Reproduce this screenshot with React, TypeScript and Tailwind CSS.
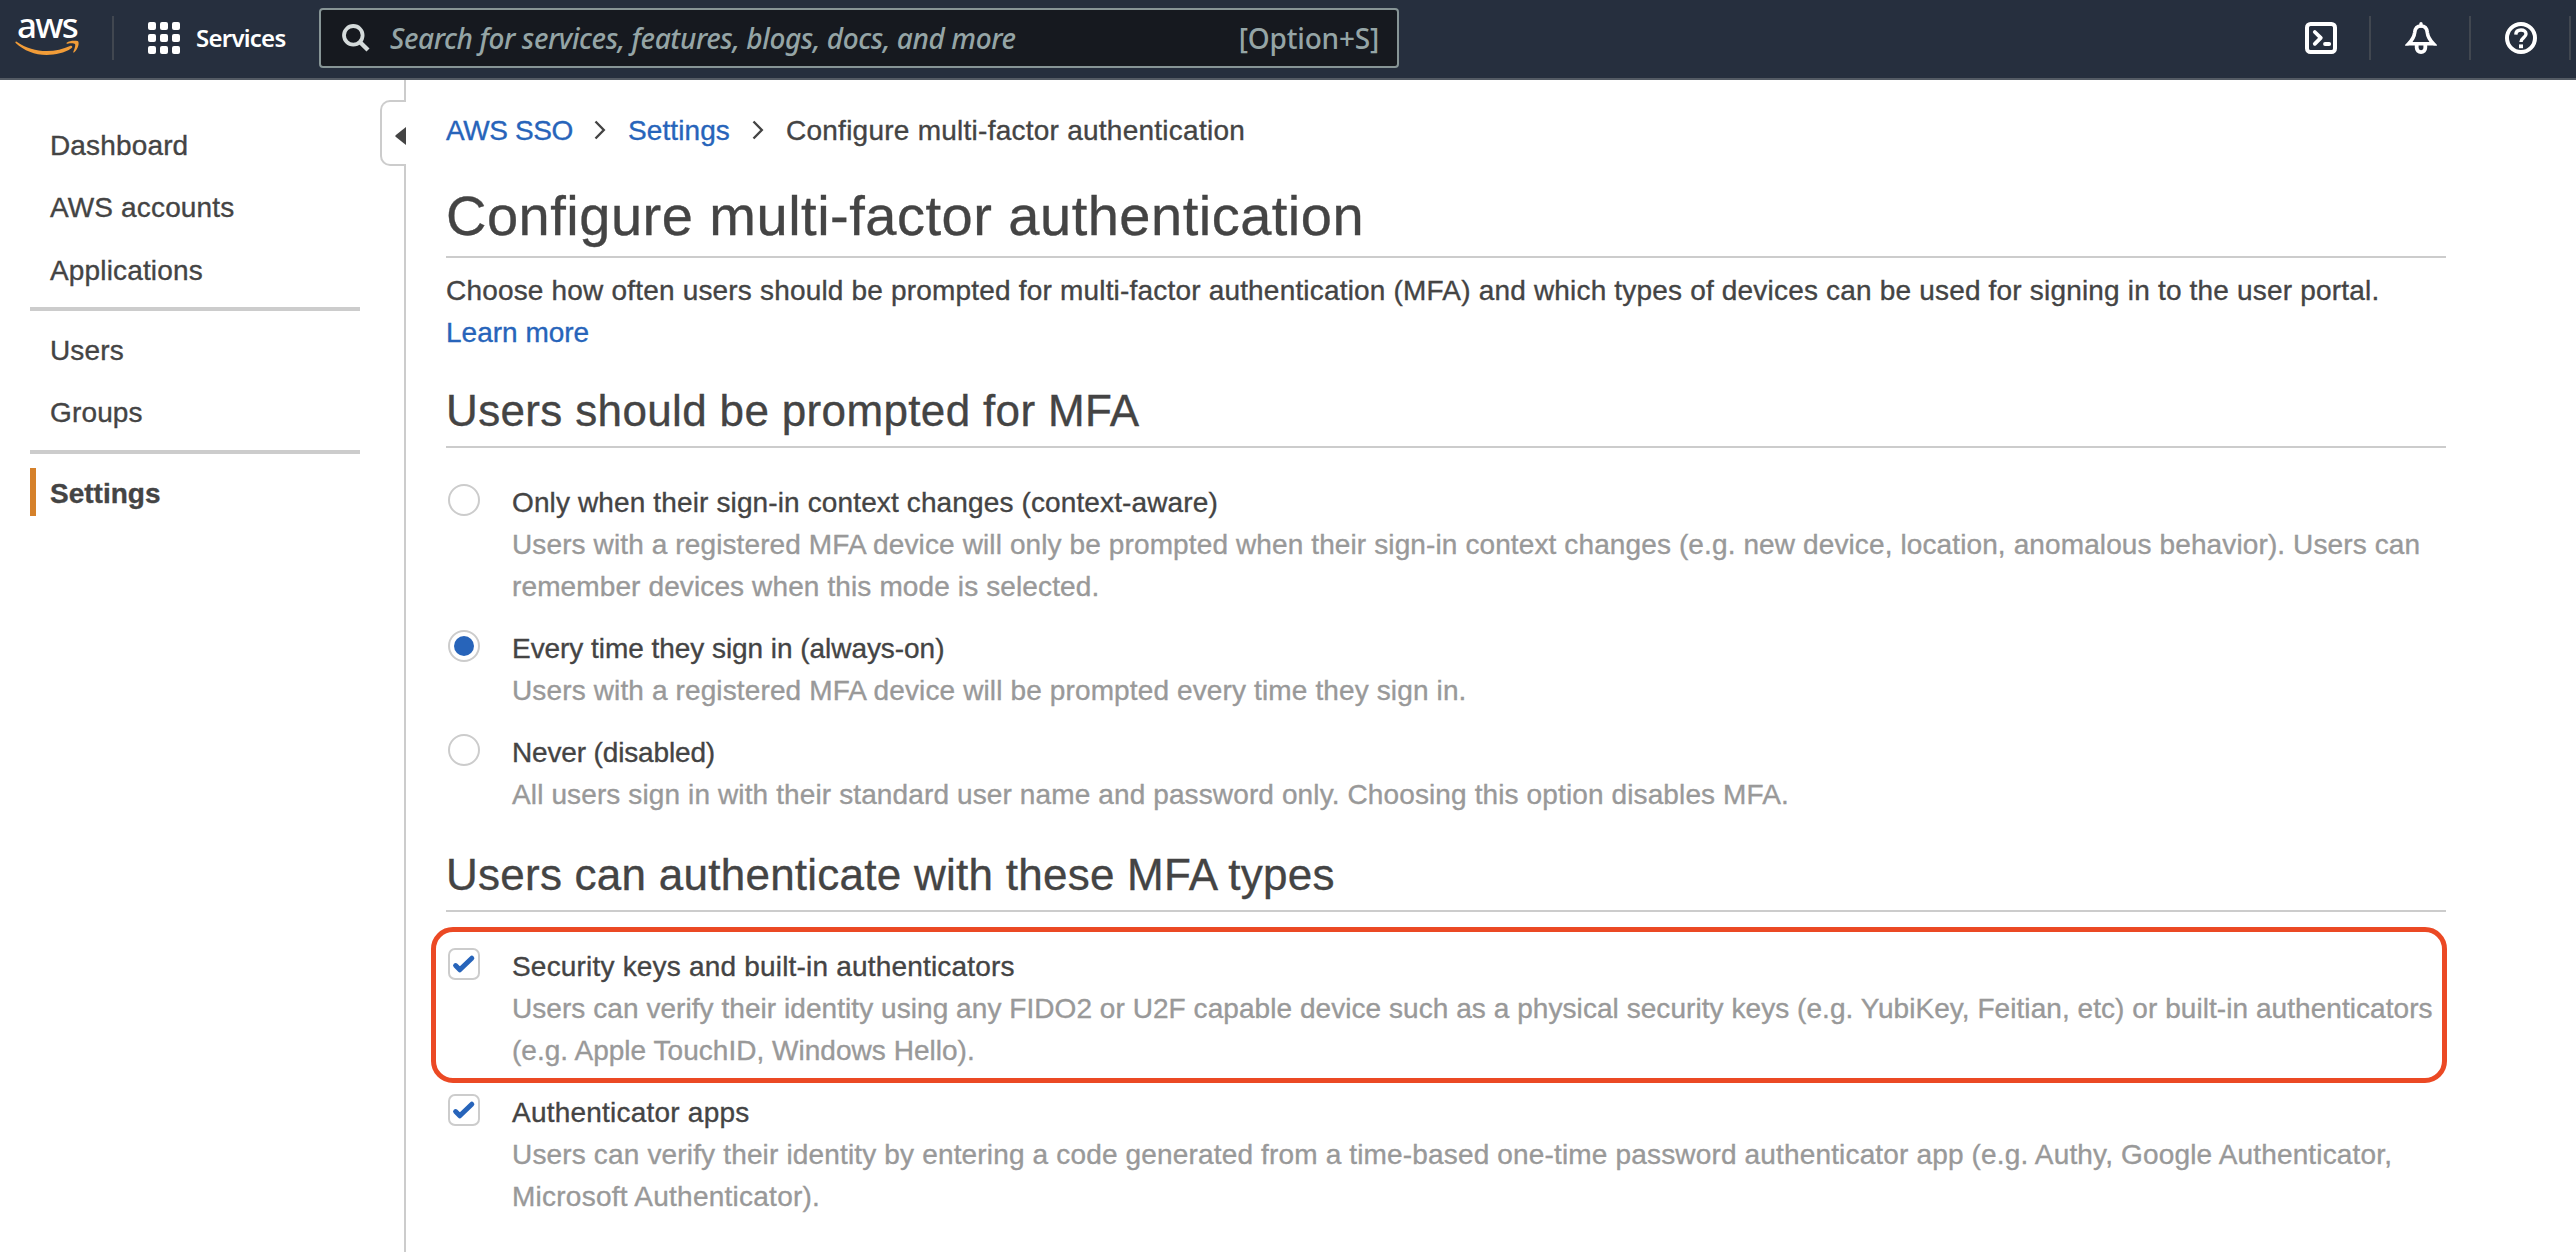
import type { ReactNode } from "react";

function AwsLogo() {
  return (
    <div className="ml-[14px] flex h-20 w-[66px] flex-col items-center pt-[11px]">
      <span className="h-[32px] font-['Noto_Sans',sans-serif] text-[35px] leading-[32px] font-medium tracking-[-1.8px] text-white">
        aws
      </span>
      <svg viewBox="42 126 198 48" className="mt-[-1px] h-4 w-[66px] shrink-0" fill="#f19c38">
        <path d="M50 131C78 150 108 159 140 159C166 159 190 153 210 144C216 141 220 147 214 151C194 165 166 171 140 171C104 171 72 158 47 135C45 132 47 129 50 131Z" />
        <path d="M200 134C208 128 222 127 233 129C239 131 236 152 223 163C220 165 219 163 220 161C225 149 227 141 225 138C222 135 211 135 203 137C199 137 199 135 200 134Z" />
      </svg>
    </div>
  );
}

function GridIcon() {
  return (
    <span className="grid h-8 w-8 grid-cols-3 gap-1">
      {Array.from({ length: 9 }, (_, i) => (
        <span key={i} className="h-2 w-2 rounded-[2px] bg-white" />
      ))}
    </span>
  );
}

function Divider() {
  return <span className="h-11 w-0.5 bg-[#414750]" />;
}

function HeaderIcon({ children }: { children: ReactNode }) {
  return (
    <svg viewBox="0 0 32 32" className="mr-8 ml-[34px] h-8 w-8" fill="none" stroke="#fff" strokeWidth="4">
      {children}
    </svg>
  );
}

function Header() {
  return (
    <header className="flex h-20 items-center border-b-2 border-[#545b64] bg-[#262f3e] pb-0.5 font-['Noto_Sans',sans-serif]">
      <AwsLogo />
      <span className="ml-8 flex">
        <Divider />
      </span>
      <span className="ml-[34px] flex">
        <GridIcon />
      </span>
      <span className="ml-4 w-[123px] text-[24px] leading-8 font-semibold tracking-[-0.75px] text-white">Services</span>
      <div className="flex h-[60px] w-[1080px] items-center rounded-[4px] border-2 border-[#879596] bg-[#16191f] text-[28px] leading-[56px] font-medium text-[#95a5a6]">
        <svg viewBox="0 0 28 28" className="ml-[21px] h-7 w-7" fill="none" stroke="#d5dbdb" strokeWidth="3.8">
          <circle cx="11.3" cy="11.3" r="9.3" />
          <path d="M17.6 17.8L26 26" strokeWidth="4.4" />
        </svg>
        <span className="ml-5 tracking-[-0.4px] italic">Search for services, features, blogs, docs, and more</span>
        <span className="mr-[18px] ml-auto tracking-[-0.2px]">[Option+S]</span>
      </div>
      <div className="mr-[5px] ml-auto flex items-center">
        <HeaderIcon>
          <rect x="2" y="2" width="28" height="28" rx="3.5" />
          <path d="M9.8 10L15.8 15.9L9.8 21.8M20 22H24.2" strokeLinecap="round" strokeLinejoin="round" strokeWidth="3.8" />
        </HeaderIcon>
        <Divider />
        <HeaderIcon>
          <path d="M16 1.7V4" strokeLinecap="round" strokeWidth="3.4" />
          <path
            d="M16 4C12 4 10 7 9.7 10.5C9.2 15 8 17.2 3.6 21.8H28.4C24 17.2 22.8 15 22.3 10.5C22 7 20 4 16 4Z"
            strokeWidth="3.6"
          />
          <path d="M0 23.6L3.6 19.9V23.6ZM32 23.6L28.4 19.9V23.6Z" fill="#fff" stroke="none" />
          <path d="M11.7 23V25.8A4.3 4.3 0 0 0 20.3 25.8V23" strokeWidth="3.8" />
        </HeaderIcon>
        <Divider />
        <HeaderIcon>
          <circle cx="16" cy="16" r="14" />
          <path d="M10.8 12.6C10.9 9.6 13 8 16 8C19 8 21 9.6 21 12C21 15.6 16 15.6 16 20" strokeWidth="3.4" />
          <path d="M14 24.3H18" strokeWidth="3.8" />
        </HeaderIcon>
        <Divider />
      </div>
    </header>
  );
}

function NavItem({ label, active = false }: { label: string; active?: boolean }) {
  return active ? (
    <a className="flex h-12 items-center border-l-6 border-[#d5812b] pt-[3px] pl-[14px] leading-[42px] font-bold">{label}</a>
  ) : (
    <a className="flex h-12 items-center pt-[3px] pl-5 leading-[42px] tracking-[0.15px]">{label}</a>
  );
}

function Sidebar() {
  return (
    <aside className="flex w-[406px] shrink-0">
      <nav className="ml-[30px] w-[330px] pt-10">
        <div className="flex flex-col gap-[14.5px]">
          <NavItem label="Dashboard" />
          <NavItem label="AWS accounts" />
          <NavItem label="Applications" />
        </div>
        <hr className="my-[14px] h-1 border-0 bg-[#ccc]" />
        <div className="flex flex-col gap-[14px]">
          <NavItem label="Users" />
          <NavItem label="Groups" />
        </div>
        <hr className="mt-[15px] mb-[14px] h-1 border-0 bg-[#ccc]" />
        <NavItem label="Settings" active />
      </nav>
      <div className="ml-5 flex w-[26px] flex-col">
        <div className="h-5 border-r-2 border-[#ccc]" />
        <button className="flex h-[66px] items-center justify-end rounded-l-[10px] border-2 border-r-0 border-[#ccc]">
          <svg viewBox="0 0 11 18" className="mt-1.5 h-[18px] w-[11px]" fill="#444">
            <path d="M11 0V18L0.6 9.8Q0 9 0.6 8.2Z" />
          </svg>
        </button>
        <div className="flex-1 border-r-2 border-[#ccc]" />
      </div>
    </aside>
  );
}

function Chevron() {
  return (
    <svg viewBox="0 0 12 20" className="mx-[22px] mb-[2px] h-5 w-3" fill="none" stroke="#444" strokeWidth="2.4">
      <path d="M1.5 1.5L9.8 10L1.5 18.5" />
    </svg>
  );
}

function Radio({ checked = false }: { checked?: boolean }) {
  return (
    <span className="ml-0.5 flex h-8 w-8 shrink-0 items-center justify-center rounded-full border-2 border-[#ccc]">
      {checked && <span className="h-5 w-5 rounded-full bg-[#2764ba]" />}
    </span>
  );
}

function Checkbox() {
  return (
    <span className="ml-0.5 h-8 w-8 shrink-0 rounded-[7px] border-2 border-[#ccc]">
      <svg viewBox="2 2 28 28" className="h-7 w-7" fill="none" stroke="#2764ba" strokeWidth="5" strokeLinecap="round" strokeLinejoin="round">
        <path d="M7.6 17.6L11.8 21.8L23.8 10.2" />
      </svg>
    </span>
  );
}

function Option({
  control,
  label,
  labelClass = "tracking-[0.13px]",
  children,
}: {
  control: ReactNode;
  label: string;
  labelClass?: string;
  children: ReactNode;
}) {
  return (
    <div className="flex">
      {control}
      <div className="-mt-[2px] ml-8 whitespace-nowrap">
        <div className={labelClass}>{label}</div>
        <div className="text-[#999]">{children}</div>
      </div>
    </div>
  );
}

export default function App() {
  return (
    <div className="flex h-[1252px] w-[2576px] flex-col overflow-hidden bg-white font-['Liberation_Sans',Arial,sans-serif] text-[28px] leading-[42px] text-[#444]">
      <Header />
      <div className="flex min-h-0 flex-1 [-webkit-text-stroke:0.35px]">
        <Sidebar />
        <main className="ml-10 w-[2000px] shrink-0">
          <div className="mt-[30px] flex h-[42px] items-center">
            <a className="w-[126px] tracking-[-0.4px] whitespace-nowrap text-[#2764ba]">AWS SSO</a>
            <Chevron />
            <a className="w-[102px] tracking-[0.1px] text-[#2764ba]">Settings</a>
            <Chevron />
            <span className="tracking-[0.25px]">Configure multi-factor authentication</span>
          </div>

          <h1 className="mt-6 h-[82px] border-b-2 border-[#ccc] text-[56px] leading-[79px] tracking-[0.5px]">
            Configure multi-factor authentication
          </h1>
          <p className="mt-3 tracking-[0.185px] whitespace-nowrap">
            Choose how often users should be prompted for multi-factor authentication (MFA) and which types of devices can be
            used for signing in to the user portal.
          </p>
          <a className="block text-[#2764ba]">Learn more</a>

          <h2 className="mt-[27px] h-[67px] border-b-2 border-[#ccc] text-[44px] leading-[60px] tracking-[0.35px]">
            Users should be prompted for MFA
          </h2>
          <div className="mt-9 flex flex-col gap-[22px]">
            <Option control={<Radio />} label="Only when their sign-in context changes (context-aware)">
              <p className="tracking-[0.115px]">
                Users with a registered MFA device will only be prompted when their sign-in context changes (e.g. new device,
                location, anomalous behavior). Users can
              </p>
              <p className="tracking-[0.12px]">remember devices when this mode is selected.</p>
            </Option>
            <Option control={<Radio checked />} label="Every time they sign in (always-on)" labelClass="tracking-[-0.05px]">
              <p className="tracking-[0.13px]">Users with a registered MFA device will be prompted every time they sign in.</p>
            </Option>
            <Option control={<Radio />} label="Never (disabled)" labelClass="tracking-[-0.15px]">
              <p className="tracking-[0.12px]">
                All users sign in with their standard user name and password only. Choosing this option disables MFA.
              </p>
            </Option>
          </div>

          <h2 className="mt-[27px] h-[69px] border-b-2 border-[#ccc] text-[44px] leading-[64px] tracking-[0.25px]">
            Users can authenticate with these MFA types
          </h2>
          <div className="mt-[15px] -mr-px -ml-[15px] h-[156px] rounded-[22px] border-5 border-[#eb4924] pt-4 pl-[10px]">
            <Option control={<Checkbox />} label="Security keys and built-in authenticators" labelClass="tracking-[0.19px]">
              <p className="tracking-[0.057px]">
                Users can verify their identity using any FIDO2 or U2F capable device such as a physical security keys (e.g.
                YubiKey, Feitian, etc) or built-in authenticators
              </p>
              <p className="tracking-[0.03px]">(e.g. Apple TouchID, Windows Hello).</p>
            </Option>
          </div>
          <div className="mt-[11px]">
            <Option control={<Checkbox />} label="Authenticator apps" labelClass="tracking-[0.22px]">
              <p className="tracking-[0.16px]">
                Users can verify their identity by entering a code generated from a time-based one-time password authenticator
                app (e.g. Authy, Google Authenticator,
              </p>
              <p className="tracking-[0.25px]">Microsoft Authenticator).</p>
            </Option>
          </div>
        </main>
      </div>
    </div>
  );
}
